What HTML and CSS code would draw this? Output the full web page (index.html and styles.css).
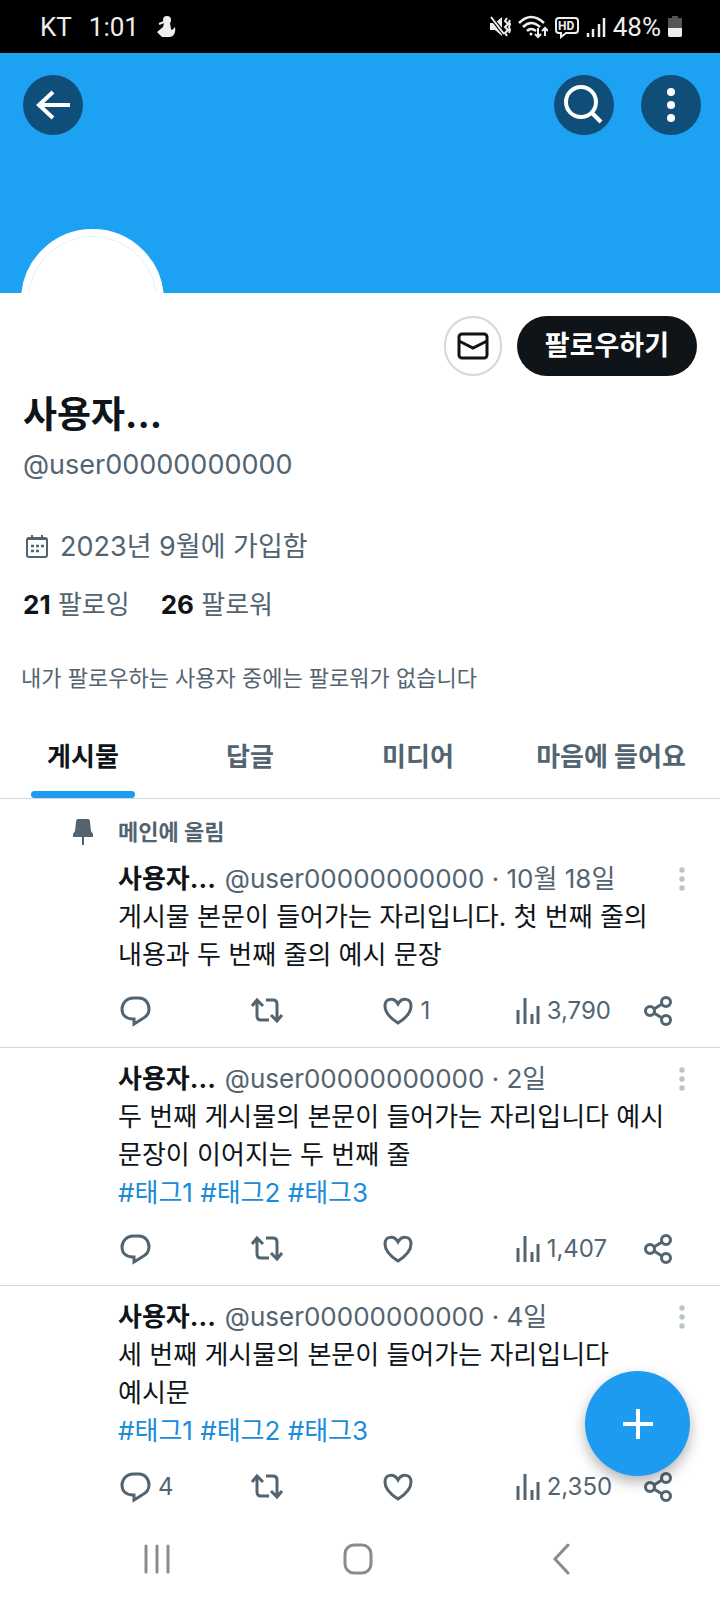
FILE: index.html
```html
<!DOCTYPE html>
<html lang="ko">
<head>
<meta charset="utf-8">
<meta name="viewport" content="width=device-width, initial-scale=1">
<title>프로필</title>
<link rel="stylesheet" href="styles.css">
</head>
<body>
<svg class="sprite" aria-hidden="true">
  <symbol id="reply" viewBox="0 0 32 32"><path d="M13 3h6c6 0 10 5 10 11 0 5-3 8-7 10l-8 5v-5h-1C6 24 2 20 2 14S7 3 13 3z"/></symbol>
  <symbol id="repost" viewBox="0 0 34 32"><path d="M2 11l5-6 6 6M7 6v15q0 4 4 4h8M16 5h7q4 0 4 4v15M21 20l6 6 5-6"/></symbol>
  <symbol id="heart" viewBox="0 0 32 32"><path d="M16 28C8 23 3 17 3 11c0-8 9-9 13-2 4-7 13-6 13 2 0 6-5 12-13 17z"/></symbol>
  <symbol id="views" viewBox="0 0 26 32"><path d="M3 15v14M10 3v26M17 19v10M23 11v18"/></symbol>
  <symbol id="share" viewBox="0 0 32 32"><circle cx="7" cy="16" r="4.5"/><circle cx="23" cy="7" r="4.5"/><circle cx="23" cy="25" r="4.5"/><path d="M11 14l8-5M11 18l8 5"/></symbol>
  <symbol id="more" viewBox="0 0 8 28"><circle cx="4" cy="5" r="2.7"/><circle cx="4" cy="14" r="2.7"/><circle cx="4" cy="23" r="2.7"/></symbol>
</svg>

<div class="status">
  <div class="status-group status-left">
    <span>KT</span><span>1:01</span>
    <svg width="20" height="24" viewBox="0 0 20 24" fill="#eee"><circle cx="11" cy="5" r="4"/><path d="M8 8h6l1 6c1 2 2 0 4-2 1 5-1 10-6 10H6l-5-5 6-5z"/><path d="M3 9l5-2" stroke="#eee" stroke-width="2"/></svg>
  </div>
  <div class="status-group">
    <svg width="22" height="24" viewBox="0 0 22 24" fill="#eee"><path d="M1 8h5l7-6v19l-7-6H1z"/><path d="M1 1l15 19" stroke="#000" stroke-width="4"/><path d="M2 2l13 17M18 3l-2 3 3 3-3 3 3 3-3 3 2 3M21 5l-1 2 1 2-1 3 1 3-1 3" fill="none" stroke="#eee" stroke-width="2"/></svg>
    <svg width="30" height="24" viewBox="0 0 30 24" fill="none" stroke="#eee" stroke-width="2.5"><path d="M1 8q12-12 25 0M5 12q8-8 17 0M9 16q4-4 9 0"/><circle cx="13" cy="19" r="1.5" fill="#eee" stroke="none"/><path d="M20 13v9M17 19l3 3 3-3M27 21v-8M24 16l3-3 3 3" stroke-width="2"/></svg>
    <svg class="hd" width="24" height="24" viewBox="0 0 24 24" fill="none" stroke="#eee" stroke-width="2"><path d="M4 3h16q3 0 3 3v9q0 3-3 3h-9l-5 4v-4H4q-3 0-3-3V6q0-3 3-3z"/><text x="3" y="15">HD</text></svg>
    <svg width="20" height="24" viewBox="0 0 20 24" stroke="#eee" stroke-width="2.5"><path d="M2 18v4M7 14v8M13 9v13M18 3v19"/></svg>
    <span>48%</span>
    <svg width="14" height="24" viewBox="0 0 14 24"><path d="M4 1h6v2h4v18q0 1-1 1H1q-1 0-1-1V3h4z" fill="#555"/><path d="M0 13h14v7q0 2-2 2H2q-2 0-2-2z" fill="#eee"/></svg>
  </div>
</div>

<header class="banner">
  <button class="round" aria-label="뒤로"><svg width="36" height="36" viewBox="0 0 36 36" fill="none" stroke="#fff" stroke-width="4"><path d="M35 18H4M18 5L4 18l14 13"/></svg></button>
  <div class="banner-tools">
    <button class="round" aria-label="검색"><svg width="40" height="40" viewBox="0 0 40 40" fill="none" stroke="#fff" stroke-width="4"><circle cx="17" cy="17" r="15"/><path d="M27 27l10 10"/></svg></button>
    <button class="round" aria-label="더 보기"><svg width="10" height="38" viewBox="0 0 10 38" fill="#fff"><circle cx="5" cy="6" r="4"/><circle cx="5" cy="19" r="4"/><circle cx="5" cy="32" r="4"/></svg></button>
  </div>
  <div class="avatar-clip"><div class="avatar"></div></div>
</header>

<main>
  <section class="profile">
    <div class="profile-buttons">
      <button class="message" aria-label="쪽지"><svg width="32" height="28" viewBox="0 0 32 28" fill="none" stroke="#0f1419" stroke-width="3"><rect x="2" y="2" width="28" height="24" rx="3"/><path d="M2 9l14 7 14-7"/></svg></button>
      <button class="follow">팔로우하기</button>
    </div>
    <h1>사용자...</h1>
    <p class="handle">@user00000000000</p>
    <p class="joined"><svg width="24" height="24" viewBox="0 0 24 24" fill="none" stroke="#536471" stroke-width="2"><rect x="2" y="3" width="20" height="19" rx="2"/><path d="M2 4h20M7 0v5M17 0v5"/><path d="M6 11h3m2 0h3m2 0h3M6 16h3m2 0h3" stroke-width="2.5"/></svg>2023년 9월에 가입함</p>
    <p class="counts"><a href="#"><b>21</b> 팔로잉</a><a href="#"><b>26</b> 팔로워</a></p>
    <p class="note">내가 팔로우하는 사용자 중에는 팔로워가 없습니다</p>
  </section>

  <nav class="tabs">
    <a class="tab active" href="#">게시물</a>
    <a class="tab" href="#">답글</a>
    <a class="tab" href="#">미디어</a>
    <a class="tab" href="#">마음에 들어요</a>
  </nav>

  <article class="post pinned-post">
    <p class="pinned"><svg width="20" height="26" viewBox="0 0 20 26" fill="#536471"><path d="M5 0h10q2 0 2 3l1 9 2 3v3h-9v8H9v-8H0v-3l2-3 1-9q0-3 2-3z"/></svg>메인에 올림</p>
    <div class="post-head"><b>사용자...</b><span>@user00000000000 · 10월 18일</span><button class="more" aria-label="더 보기"><svg width="8" height="28"><use href="#more"/></svg></button></div>
    <p class="body">게시물 본문이 들어가는 자리입니다. 첫 번째 줄의<br>내용과 두 번째 줄의 예시 문장</p>
    <div class="actions">
      <button aria-label="답글"><svg width="32" height="32"><use href="#reply"/></svg></button>
      <button aria-label="재게시"><svg width="34" height="32"><use href="#repost"/></svg></button>
      <button aria-label="마음에 들어요"><svg width="32" height="32"><use href="#heart"/></svg>1</button>
      <button aria-label="조회수"><svg width="26" height="32"><use href="#views"/></svg>3,790</button>
      <button aria-label="공유"><svg width="32" height="32"><use href="#share"/></svg></button>
    </div>
  </article>

  <article class="post">
    <div class="post-head"><b>사용자...</b><span>@user00000000000 · 2일</span><button class="more" aria-label="더 보기"><svg width="8" height="28"><use href="#more"/></svg></button></div>
    <p class="body">두 번째 게시물의 본문이 들어가는 자리입니다 예시<br>문장이 이어지는 두 번째 줄<br><a href="#">#태그1</a> <a href="#">#태그2</a> <a href="#">#태그3</a></p>
    <div class="actions">
      <button aria-label="답글"><svg width="32" height="32"><use href="#reply"/></svg></button>
      <button aria-label="재게시"><svg width="34" height="32"><use href="#repost"/></svg></button>
      <button aria-label="마음에 들어요"><svg width="32" height="32"><use href="#heart"/></svg></button>
      <button aria-label="조회수"><svg width="26" height="32"><use href="#views"/></svg>1,407</button>
      <button aria-label="공유"><svg width="32" height="32"><use href="#share"/></svg></button>
    </div>
  </article>

  <article class="post last">
    <div class="post-head"><b>사용자...</b><span>@user00000000000 · 4일</span><button class="more" aria-label="더 보기"><svg width="8" height="28"><use href="#more"/></svg></button></div>
    <p class="body">세 번째 게시물의 본문이 들어가는 자리입니다<br>예시문<br><a href="#">#태그1</a> <a href="#">#태그2</a> <a href="#">#태그3</a></p>
    <div class="actions">
      <button aria-label="답글"><svg width="32" height="32"><use href="#reply"/></svg>4</button>
      <button aria-label="재게시"><svg width="34" height="32"><use href="#repost"/></svg></button>
      <button aria-label="마음에 들어요"><svg width="32" height="32"><use href="#heart"/></svg></button>
      <button aria-label="조회수"><svg width="26" height="32"><use href="#views"/></svg>2,350</button>
      <button aria-label="공유"><svg width="32" height="32"><use href="#share"/></svg></button>
    </div>
    <button class="compose" aria-label="게시하기"><svg width="32" height="32" viewBox="0 0 32 32" stroke="#fff" stroke-width="4"><path d="M16 1v30M1 16h30"/></svg></button>
  </article>
</main>

<footer class="system-nav">
  <button aria-label="최근 앱"><svg width="28" height="32" viewBox="0 0 28 32"><path d="M3 3v26M14 3v26M25 3v26"/></svg></button>
  <button aria-label="홈"><svg width="30" height="32" viewBox="0 0 30 32"><rect x="2" y="2" width="26" height="28" rx="9"/></svg></button>
  <button aria-label="이전"><svg width="20" height="32" viewBox="0 0 20 32"><path d="M17 2L4 16l13 14"/></svg></button>
</footer>
</body>
</html>
```

FILE: styles.css
```css
* { box-sizing: border-box; }
body { margin: 0; background: #fff; color: #0f1419; font-family: Inter, "Noto Sans CJK KR", sans-serif; font-size: 26px; line-height: 38px; }
h1, p { margin: 0; }
a { color: inherit; text-decoration: none; }
button { display: flex; align-items: center; justify-content: center; padding: 0; border: 0; background: none; color: inherit; font: inherit; }
svg { display: block; flex: none; }
.sprite { position: absolute; width: 0; height: 0; }

.status { display: flex; justify-content: space-between; align-items: center; height: 53px; padding: 0 38px 0 40px; background: #000; color: #eee; font-family: Roboto, sans-serif; font-size: 26px; }
.status-group { display: flex; align-items: center; gap: 7px; }
.status-left { gap: 17px; }
.hd text { fill: #eee; stroke: none; font-size: 12px; font-weight: 700; }

.banner { position: relative; display: flex; justify-content: space-between; height: 240px; padding: 22px 19px 0 23px; background: #1da1f2; }
.banner-tools { display: flex; gap: 27px; }
.round { width: 60px; height: 60px; border-radius: 50%; background: #0f4e79; }
.avatar-clip { position: absolute; left: 21px; bottom: 0; width: 143px; height: 64px; overflow: hidden; }
.avatar { height: 143px; border: 7px solid #fff; border-radius: 50%; background: #fff; box-shadow: inset 0 0 0 1px #e3f0f8; }

.profile { padding: 23px 23px 0; color: #536471; }
.profile-buttons { display: flex; justify-content: flex-end; gap: 15px; }
.message { width: 58px; height: 60px; border: 2px solid #cfd9de; border-radius: 30px; }
.follow { height: 60px; padding: 0 28px; border-radius: 30px; background: #0f1419; color: #fff; font-weight: 700; font-size: 27px; }
h1 { margin-top: 15px; color: #0f1419; font-size: 37px; line-height: 48px; }
.handle { margin-top: 7px; font-size: 27px; }
.joined { display: flex; align-items: center; gap: 11px; margin-top: 44px; padding-left: 2px; font-size: 27px; }
.counts { display: flex; gap: 31px; margin-top: 20px; }
.counts b { color: #0f1419; }
.note { margin: 35px 0 0 -2px; font-size: 22px; }

.tabs { display: grid; grid-template-columns: 166fr 168fr 168fr 218fr; height: 102px; border-bottom: 1px solid #cfd9de; }
.tab { display: flex; flex-direction: column; align-items: center; justify-content: flex-end; color: #536471; font-weight: 700; }
.tab::after { content: ""; width: 104px; height: 7px; margin-top: 15px; border-radius: 4px; }
.active { color: #0f1419; }
.active::after { background: #1d9bf0; }

.post { position: relative; padding: 12px 28px 19px 118px; border-bottom: 1px solid #cfd9de; }
.pinned-post { padding-top: 14px; }
.last { border: 0; }
.pinned { display: flex; align-items: center; gap: 25px; margin: 0 0 9px -45px; color: #536471; font-size: 22px; font-weight: 700; }
.post-head { display: flex; gap: 9px; height: 38px; color: #536471; white-space: nowrap; }
.post-head b { color: #0f1419; }
.more { width: 20px; height: 38px; margin-left: auto; fill: #b9c4ca; }
.body { white-space: nowrap; }
.body a { color: #1b8cd8; }
.actions { display: grid; grid-template-columns: 130fr 132fr 132fr 128fr 49fr; height: 36px; margin-top: 18px; padding-left: 2px; color: #536471; font-size: 24px; }
.actions button { justify-content: flex-start; gap: 6px; }
.actions svg { fill: none; stroke: #536471; stroke-width: 3; }
.compose { position: absolute; right: 30px; bottom: 47px; width: 105px; height: 105px; border-radius: 50%; background: #1d9bf0; box-shadow: 0 6px 14px rgba(0, 0, 0, .3); }

.system-nav { display: grid; grid-template-columns: 314fr 88fr 318fr; height: 66px; padding-top: 6px; }
.system-nav svg { fill: none; stroke: #8b8b8b; stroke-width: 3; stroke-linecap: round; }
```
